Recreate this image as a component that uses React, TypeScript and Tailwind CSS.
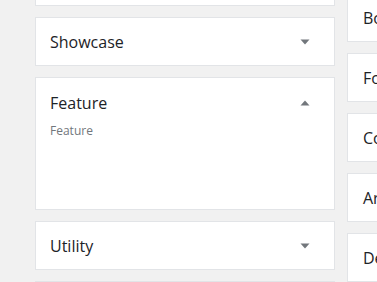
const font = { fontFamily: '"Open Sans", "Noto Sans", sans-serif' };

function Arrow({ up = false }: { up?: boolean }) {
  return (
    <svg width="10" height="6" viewBox="0 0 10 6" className="shrink-0">
      {up ? <polygon points="0.5,5.5 9.5,5.5 5,0.5" fill="#72777c" /> : <polygon points="0.5,0.5 9.5,0.5 5,5.5" fill="#72777c" />}
    </svg>
  );
}

function Section({ title }: { title?: string }) {
  return (
    <div className="h-[49px] shrink-0 bg-white border border-[#e2e4e7] flex items-center justify-between pl-[14px] pr-[24px]">
      {title && (
        <>
          <span className="text-[16px] text-[#1d2327]">{title}</span>
          <Arrow />
        </>
      )}
    </div>
  );
}

const sideItems = ["Body", "Footer", "Colors", "Archive", "Design"];

export default function App() {
  return (
    <div className="w-[377px] h-[282px] overflow-hidden bg-[#f1f1f1] flex" style={font}>
      {/* sections list, scrolled part way */}
      <div className="ml-[35px] w-[300px] shrink-0 flex flex-col gap-[11px] -mt-[43px]">
        <Section />
        <Section title="Showcase" />
        <div className="h-[133px] shrink-0 bg-white border border-[#e2e4e7] pl-[14px] pr-[24px] pt-[13px]">
          <div className="flex items-center justify-between">
            <span className="text-[16px] text-[#1d2327]">Feature</span>
            <Arrow up />
          </div>
          <p className="mt-[7px] text-[12px] text-[#72777c]">Feature</p>
        </div>
        <Section title="Utility" />
        <Section />
      </div>
      <div className="ml-[12px] w-[200px] shrink-0 flex flex-col gap-[11px] -mt-[7px]">
        {sideItems.map((s) => (
          <div key={s} className="h-[49px] shrink-0 bg-white border border-[#e2e4e7] flex items-center pl-[15px]">
            <span className="text-[16px] text-[#1d2327]">{s}</span>
          </div>
        ))}
      </div>
    </div>
  );
}
